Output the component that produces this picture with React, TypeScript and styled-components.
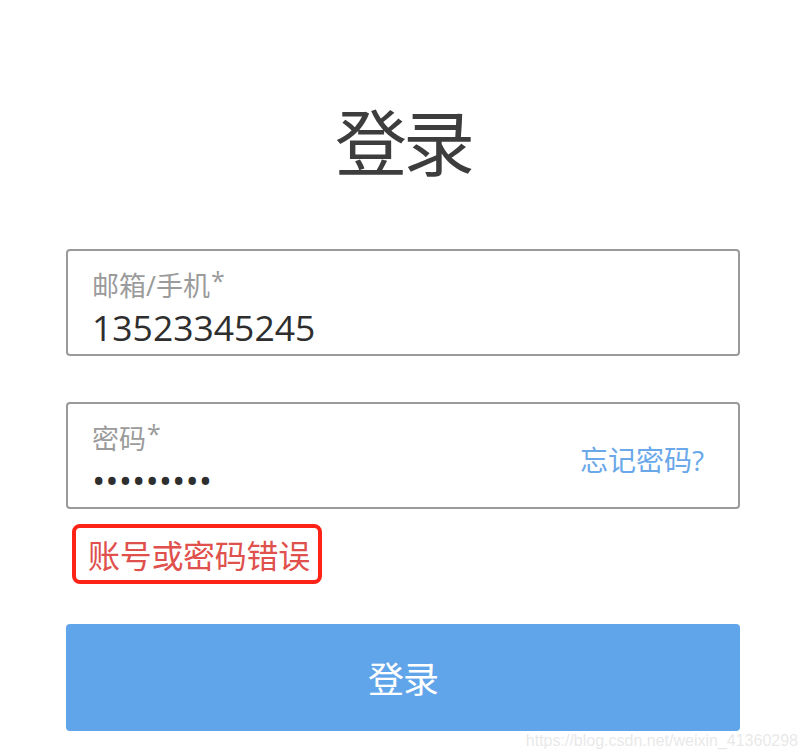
import React from 'react'
import styled, { createGlobalStyle } from 'styled-components'

const GlobalStyle = createGlobalStyle`
  html, body {
    margin: 0;
    padding: 0;
    background: #ffffff;
  }
  body {
    font-family: "Open Sans", "Noto Sans CJK SC", sans-serif;
  }
`

const Page = styled.div`
  position: relative;
  width: 808px;
  height: 754px;
  overflow: hidden;
  background: #ffffff;
`

const Form = styled.form`
  width: 674px;
  padding-top: 94px;
  margin-left: 66px;
  display: flex;
  flex-direction: column;
`

const Title = styled.h1`
  margin: 0;
  text-align: center;
  font-size: 72px;
  font-weight: 400;
  line-height: 96px;
  color: #3d3d3d;
  letter-spacing: -4px;
`

const Field = styled.label<{ $top: number }>`
  box-sizing: border-box;
  height: 107px;
  margin-top: ${(p) => p.$top}px;
  border: 2px solid #9a9a9a;
  border-radius: 4px;
  padding: 12px 24px 0 24px;
  display: flex;
  align-items: center;
  gap: 16px;
`

const FieldBody = styled.div`
  flex: 1;
  display: flex;
  flex-direction: column;
`

const Label = styled.span`
  font-size: 27px;
  line-height: 36px;
  color: #9b9b9b;
`

const Star = styled.sup`
  font-size: 25px;
  line-height: 0;
  vertical-align: 6px;
  margin-left: 1px;
`

const Input = styled.input`
  border: none;
  outline: none;
  padding: 0;
  margin: 0;
  background: transparent;
  font-family: "Open Sans", "Noto Sans CJK SC", sans-serif;
  font-size: 35.5px;
  line-height: 46px;
  height: 46px;
  color: #2e2e2e;
  width: 100%;
`

const Forgot = styled.a`
  font-size: 28px;
  color: #6aa8ea;
  text-decoration: none;
  margin-right: 10px;
  margin-bottom: 6px;
  white-space: nowrap;
`

const ErrorBox = styled.div`
  align-self: flex-start;
  margin-top: 15px;
  margin-left: 6px;
  box-sizing: border-box;
  height: 60px;
  padding: 0 8px 0 12px;
  border: 4px solid #ff2217;
  border-radius: 8px;
  display: flex;
  align-items: center;
  font-size: 32px;
  color: #e0504c;
  letter-spacing: -0.3px;
`

const SubmitButton = styled.button`
  margin-top: 40px;
  height: 107px;
  border: none;
  border-radius: 4px;
  background: #60a5ea;
  color: #ffffff;
  font-family: "Open Sans", "Noto Sans CJK SC", sans-serif;
  font-size: 36px;
  letter-spacing: -1px;
  cursor: pointer;
`

const Watermark = styled.div`
  position: absolute;
  right: 10px;
  bottom: 4px;
  font-family: "Liberation Sans", Arial, sans-serif;
  font-size: 16px;
  color: rgba(225, 225, 225, 0.75);
  pointer-events: none;
`

export default function App() {
  return (
    <>
      <GlobalStyle />
      <Page>
        <Form onSubmit={(e) => e.preventDefault()}>
          <Title>登录</Title>
          <Field $top={59}>
            <FieldBody>
              <Label>
                邮箱/手机<Star>*</Star>
              </Label>
              <Input type="text" defaultValue="13523345245" readOnly />
            </FieldBody>
          </Field>
          <Field $top={46}>
            <FieldBody>
              <Label>
                密码<Star>*</Star>
              </Label>
              <Input type="password" defaultValue="123456789" readOnly />
            </FieldBody>
            <Forgot href="#">忘记密码?</Forgot>
          </Field>
          <ErrorBox>账号或密码错误</ErrorBox>
          <SubmitButton type="submit">登录</SubmitButton>
        </Form>
        <Watermark>https://blog.csdn.net/weixin_41360298</Watermark>
      </Page>
    </>
  )
}
